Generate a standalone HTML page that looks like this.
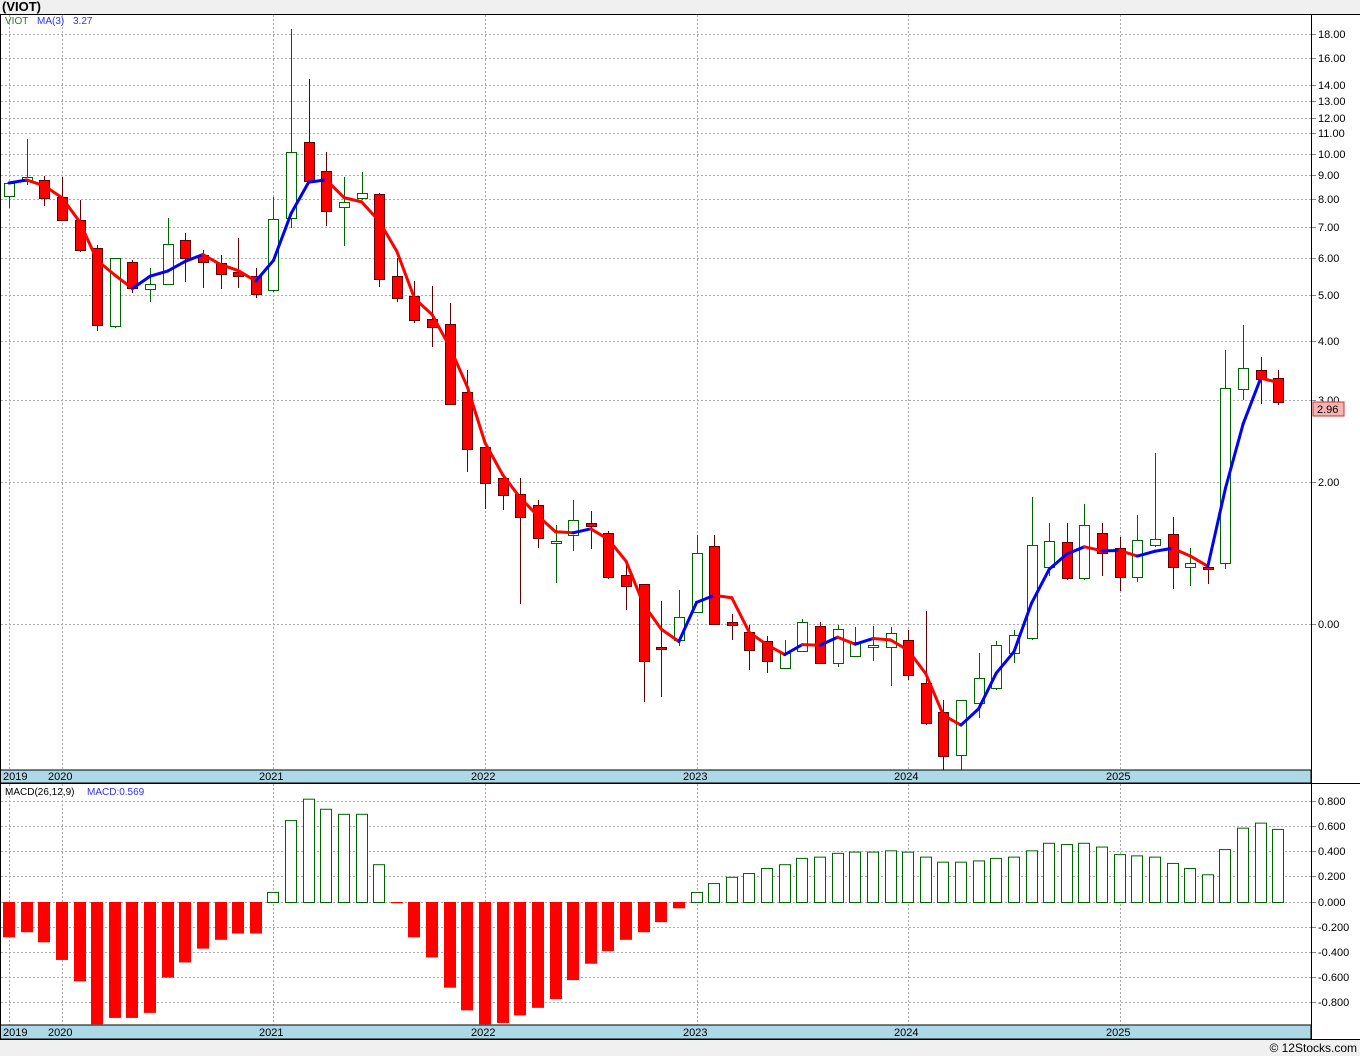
<!DOCTYPE html>
<html><head><meta charset="utf-8"><style>
html,body{margin:0;padding:0;background:#fff;}
body{width:1360px;height:1056px;overflow:hidden;position:relative;font-family:"Liberation Sans",sans-serif;}
</style></head><body>
<svg id="c" width="1360" height="1056" xmlns="http://www.w3.org/2000/svg" style="position:absolute;left:0;top:0;font-family:'Liberation Sans',sans-serif">
<rect x="0" y="0" width="1360" height="14" fill="#f0f0f0"/>
<text x="2" y="11" font-size="13" font-weight="bold" fill="#000">(VIOT)</text>
<rect x="0" y="1039" width="1360" height="17" fill="#f0f0f0"/>
<text x="1357" y="1052" font-size="12" text-anchor="end" fill="#000">© 12Stocks.com</text>
<g id="grid"></g>
<g id="price"></g>
<g id="macd"></g>
<rect x="0" y="770" width="1311" height="13" fill="#add8e6" stroke="#000"/>
<rect x="0" y="1025" width="1311" height="14" fill="#add8e6" stroke="#000"/>
<g font-size="11" fill="#000">
<text x="3" y="780">2019</text><text x="48" y="780">2020</text><text x="259" y="780">2021</text><text x="471" y="780">2022</text><text x="683" y="780">2023</text><text x="894" y="780">2024</text><text x="1106" y="780">2025</text>
<text x="3" y="1036">2019</text><text x="48" y="1036">2020</text><text x="259" y="1036">2021</text><text x="471" y="1036">2022</text><text x="683" y="1036">2023</text><text x="894" y="1036">2024</text><text x="1106" y="1036">2025</text>
</g>
<line x1="0.5" y1="14" x2="0.5" y2="1039" stroke="#000"/>
<line x1="0" y1="14.5" x2="1360" y2="14.5" stroke="#000"/>
<line x1="1311.5" y1="14" x2="1311.5" y2="1039" stroke="#000"/>
<line x1="0" y1="783.5" x2="1360" y2="783.5" stroke="#000"/>
<line x1="0" y1="1039.5" x2="1360" y2="1039.5" stroke="#000"/>
<text x="5" y="24" font-size="10" fill="#2a7a2a">VIOT</text>
<text x="37" y="24" font-size="10" fill="#3030ff">MA(3)</text>
<text x="73" y="24" font-size="10" fill="#3030ff">3.27</text>
<text x="5" y="795" font-size="10" fill="#000">MACD(26,12,9)</text>
<text x="87" y="795" font-size="10" fill="#3030ff">MACD:0.569</text>
<rect x="1313" y="402" width="31" height="14" fill="#f4b4b4" stroke="#c33"/>
<text x="1317" y="413" font-size="11" fill="#000">2.96</text>
</svg>
<script>
var NS="http://www.w3.org/2000/svg";
function el(p,t,a){var e=document.createElementNS(NS,t);for(var k in a)e.setAttribute(k,a[k]);p.appendChild(e);return e;}
var g=document.getElementById('grid');
var pl=[[18,34,"18.00"],[16,58,"16.00"],[14,85,"14.00"],[13,101,"13.00"],[12,118,"12.00"],[11,133,"11.00"],[10,154,"10.00"],[9,175,"9.00"],[8,199,"8.00"],[7,227,"7.00"],[6,258,"6.00"],[5,295,"5.00"],[4,341,"4.00"],[3,400,"3.00"],[2,482,"2.00"],[1,624,"0.00"]];
pl.forEach(function(p){el(g,'line',{x1:1,y1:p[1]+.5,x2:1311,y2:p[1]+.5,stroke:'#aaa','stroke-dasharray':'2,2'});
el(g,'line',{x1:1311,y1:p[1]+.5,x2:1316,y2:p[1]+.5,stroke:'#888'});
var t=el(g,'text',{x:1318,y:p[1]+4,'font-size':11,fill:'#000'});t.textContent=p[2];});
var ml=[[0.8,801,"0.800"],[0.6,826,"0.600"],[0.4,851,"0.400"],[0.2,876,"0.200"],[0,902,"0.000"],[-0.2,927,"-0.200"],[-0.4,952,"-0.400"],[-0.6,977,"-0.600"],[-0.8,1002,"-0.800"]];
ml.forEach(function(p){el(g,'line',{x1:1,y1:p[1]+.5,x2:1311,y2:p[1]+.5,stroke:'#aaa','stroke-dasharray':'2,2'});
el(g,'line',{x1:1311,y1:p[1]+.5,x2:1316,y2:p[1]+.5,stroke:'#888'});
var t=el(g,'text',{x:1318,y:p[1]+4,'font-size':11,fill:'#000'});t.textContent=p[2];});
[9,62,273,485,697,908,1120].forEach(function(x){el(g,'line',{x1:x+.5,y1:15,x2:x+.5,y2:770,stroke:'#aaa','stroke-dasharray':'2,2'});el(g,'line',{x1:x+.5,y1:784,x2:x+.5,y2:1025,stroke:'#aaa','stroke-dasharray':'2,2'});});
// [up?, high, bodyTop, bodyBottom, low]
var C=[[1,183,183,196,208],[1,139,177,181,185],[0,176,180,198,206],[0,177,197,220,220],[0,200,220,250,252],[0,245,248,325,331],[1,258,258,326,328],[0,260,262,288,293],[1,268,284,289,302],[1,218,244,284,285],[0,233,240,258,282],[0,250,255,262,288],[0,255,263,274,289],[0,238,272,276,288],[0,268,276,294,298],[1,197,219,290,292],[1,29,152,218,228],[0,79,142,181,183],[0,152,171,211,226],[1,177,202,207,246],[1,172,193,198,200],[0,193,194,279,287],[0,258,276,298,302],[0,281,296,320,323],[0,286,319,327,347],[0,303,324,404,405],[0,370,392,449,472],[0,447,447,483,509],[0,475,478,495,510],[0,478,494,517,604],[0,500,505,538,548],[1,525,541,542,583],[1,500,520,535,551],[0,511,523,526,549],[0,531,533,577,579],[0,563,575,586,610],[0,584,584,661,702],[0,601,647,649,697],[1,590,617,640,646],[1,535,553,612,612],[0,535,546,624,625],[0,614,622,625,640],[0,625,632,650,670],[0,636,641,661,673],[1,640,653,668,669],[1,619,622,651,652],[0,622,626,663,664],[1,625,629,663,667],[1,627,642,656,657],[1,626,645,647,661],[1,627,633,647,686],[0,630,640,675,680],[0,611,683,723,725],[0,700,712,756,770],[1,700,700,755,770],[1,653,678,703,718],[1,641,645,688,690],[1,630,635,653,663],[1,497,545,638,640],[1,523,541,567,576],[0,523,542,578,580],[1,504,525,578,580],[0,523,533,553,576],[0,537,548,577,591],[1,515,540,577,582],[1,453,539,545,547],[0,517,534,567,589],[1,548,563,567,586],[0,560,567,569,584],[1,350,388,563,569],[1,325,368,389,400],[0,357,370,379,404],[0,370,378,402,405]];
var pr=document.getElementById('price');
function X(i){return 9+17.63*i;}
function y2p(y){return 10*Math.pow(10,(154-y)/469);}
function p2y(p){return 154-469*Math.log10(p/10);}
C.forEach(function(c,i){var x=Math.round(X(i));var col=c[0]?'#006400':'#800000';
el(pr,'line',{x1:x+.5,y1:c[1],x2:x+.5,y2:c[4],stroke:c[0]?'#006400':'#600000'});
var h=Math.max(c[3]-c[2],2);
el(pr,'rect',{x:x-5+.5,y:c[2]+.5,width:10,height:h,fill:c[0]?'#fff':'#f00',stroke:c[0]?'#006400':'#600000'});});
var cl=C.map(function(c){return y2p(c[0]?c[2]:c[3]);});
var pts=[];for(var i=2;i<C.length;i++){pts.push([X(i),p2y((cl[i]+cl[i-1]+cl[i-2])/3)]);}
pts.unshift([X(0),p2y(cl[0])],[X(1),p2y((cl[0]+cl[1])/2)]);
for(var i=1;i<pts.length;i++){el(pr,'line',{x1:pts[i-1][0],y1:pts[i-1][1],x2:pts[i][0],y2:pts[i][1],stroke:pts[i][1]<pts[i-1][1]?'#0000ff':'#ff0000','stroke-width':3,'stroke-linecap':'round'});}
var M=[-0.28,-0.24,-0.32,-0.46,-0.63,-0.97,-0.92,-0.92,-0.88,-0.60,-0.48,-0.37,-0.30,-0.25,-0.25,0.08,0.65,0.82,0.74,0.70,0.70,0.30,-0.01,-0.28,-0.44,-0.68,-0.86,-0.97,-0.96,-0.90,-0.84,-0.77,-0.62,-0.49,-0.39,-0.30,-0.24,-0.16,-0.05,0.08,0.15,0.20,0.23,0.27,0.30,0.35,0.36,0.39,0.40,0.40,0.41,0.40,0.36,0.32,0.32,0.33,0.35,0.36,0.41,0.47,0.46,0.47,0.44,0.38,0.37,0.36,0.31,0.27,0.22,0.42,0.59,0.63,0.58];
var mg=document.getElementById('macd');
M.forEach(function(v,i){var x=Math.round(X(i));var y=902-126*v;
if(v>=0)el(mg,'rect',{x:x-5.5,y:y+.5,width:11,height:902-y,fill:'#fff',stroke:'#006400'});
else el(mg,'rect',{x:x-6,y:902,width:12,height:y-902,fill:'#f00'});});
</script>
</body></html>
